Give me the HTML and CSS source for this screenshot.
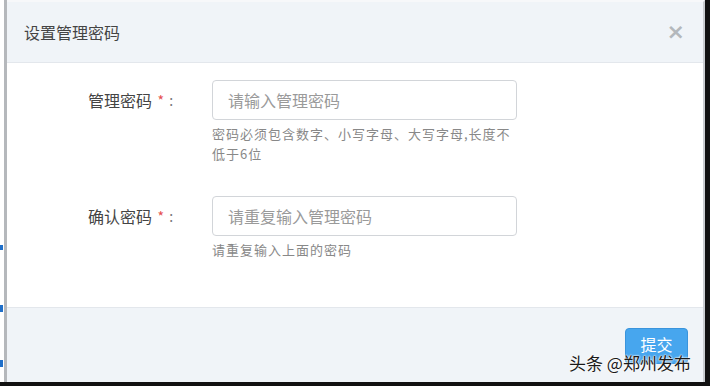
FILE: index.html
```html
<!DOCTYPE html>
<html lang="zh">
<head>
<meta charset="utf-8">
<link rel="stylesheet" href="styles.css">
</head>
<body>
<div class="screen">
  <div class="backdrop">
    <span class="mark m1"></span>
    <span class="mark m2"></span>
    <span class="mark m3"></span>
  </div>
  <div class="edge"></div>
  <div class="dialog">
    <div class="header">
      <span class="title">设置管理密码</span>
      <span class="close">×</span>
    </div>
    <div class="body">
      <div class="row">
        <div class="label">管理密码 <span class="req">*</span><span class="colon">:</span></div>
        <div class="field">
          <input class="input" type="text" placeholder="请输入管理密码">
          <div class="help">密码必须包含数字、小写字母、大写字母,长度不低于6位</div>
        </div>
      </div>
      <div class="row">
        <div class="label">确认密码 <span class="req">*</span><span class="colon">:</span></div>
        <div class="field">
          <input class="input" type="text" placeholder="请重复输入管理密码">
          <div class="help">请重复输入上面的密码</div>
        </div>
      </div>
    </div>
    <div class="footer">
      <button class="submit">提交</button>
    </div>
  </div>
  <div class="watermark">头条 @郑州发布</div>
</div>
</body>
</html>
```
FILE: styles.css
```css
* { box-sizing: border-box; }
html, body { margin: 0; padding: 0; }
body {
  background: #111;
  width: 710px;
  height: 386px;
  overflow: hidden;
  font-family: "Noto Sans CJK SC", "Liberation Sans", sans-serif;
}
.screen {
  position: relative;
  width: 705px;
  height: 382px;
  background: #fff;
  display: flex;
  overflow: hidden;
}
.backdrop {
  width: 4px;
  display: flex;
  flex-direction: column;
}
.mark {
  display: block;
  width: 3px;
  height: 7px;
  background: #1f6fc9;
}
.m1 { margin-top: 245px; height: 5px; }
.m2 { margin-top: 55px; }
.m3 { margin-top: 48px; }
.edge {
  width: 3px;
  background: #b5b8bc;
}
.dialog {
  flex: 1;
  display: flex;
  flex-direction: column;
  border-right: 2px solid #c9ccd0;
  border-top: 2px solid #f7f8fa;
}
.header {
  height: 61px;
  background: #f0f4f8;
  border-bottom: 1px solid #e3e7ec;
  display: flex;
  align-items: center;
  justify-content: space-between;
  padding: 0 18px 0 17px;
}
.title {
  font-size: 16px;
  color: #444;
}
.close {
  font-size: 22px;
  font-weight: bold;
  color: #b4b8bc;
  line-height: 1;
  font-family: "DejaVu Sans", sans-serif;
}
.body {
  height: 244px;
  background: #fff;
  padding-top: 17px;
  display: flex;
  flex-direction: column;
  gap: 32px;
}
.row {
  display: flex;
  align-items: flex-start;
}
.label {
  width: 205px;
  padding-left: 81px;
  height: 40px;
  display: flex;
  align-items: center;
  font-size: 16px;
  color: #444;
  white-space: pre;
}
.req {
  color: #e54e4e;
  margin-left: 2px;
  font-size: 14px;
}
.colon {
  color: #777;
  margin-left: 5px;
  font-size: 14px;
}
.field {
  display: flex;
  flex-direction: column;
}
.input {
  width: 305px;
  height: 40px;
  border: 1px solid #d2d5d9;
  border-radius: 4px;
  padding: 0 15px;
  font-size: 16px;
  font-family: "Noto Sans CJK SC", "Liberation Sans", sans-serif;
  background: #fff;
  outline: none;
}
.input::placeholder { color: #9a9a9a; }
.help {
  width: 304px;
  margin-top: 4px;
  font-size: 13px;
  letter-spacing: 1px;
  line-height: 20px;
  color: #888;
}
.footer {
  flex: 1;
  background: #f0f4f8;
  border-top: 1px solid #e3e7ec;
  display: flex;
  justify-content: flex-end;
  align-items: flex-start;
  padding: 20px 15px 0 0;
}
.submit {
  width: 63px;
  height: 36px;
  border: 1px solid #3a94dc;
  border-radius: 4px;
  background: #47a6ee;
  color: #fff;
  font-size: 16px;
  font-family: "Noto Sans CJK SC", sans-serif;
  padding: 0 0 4px;
}
.watermark {
  position: absolute;
  left: 569px;
  top: 351px;
  font-size: 17px;
  color: #1a1a1a;
  line-height: 24px;
  text-shadow: 0 0 2px #fff, 0 0 2px #fff, 0 0 1px #fff;
  white-space: nowrap;
}
```
